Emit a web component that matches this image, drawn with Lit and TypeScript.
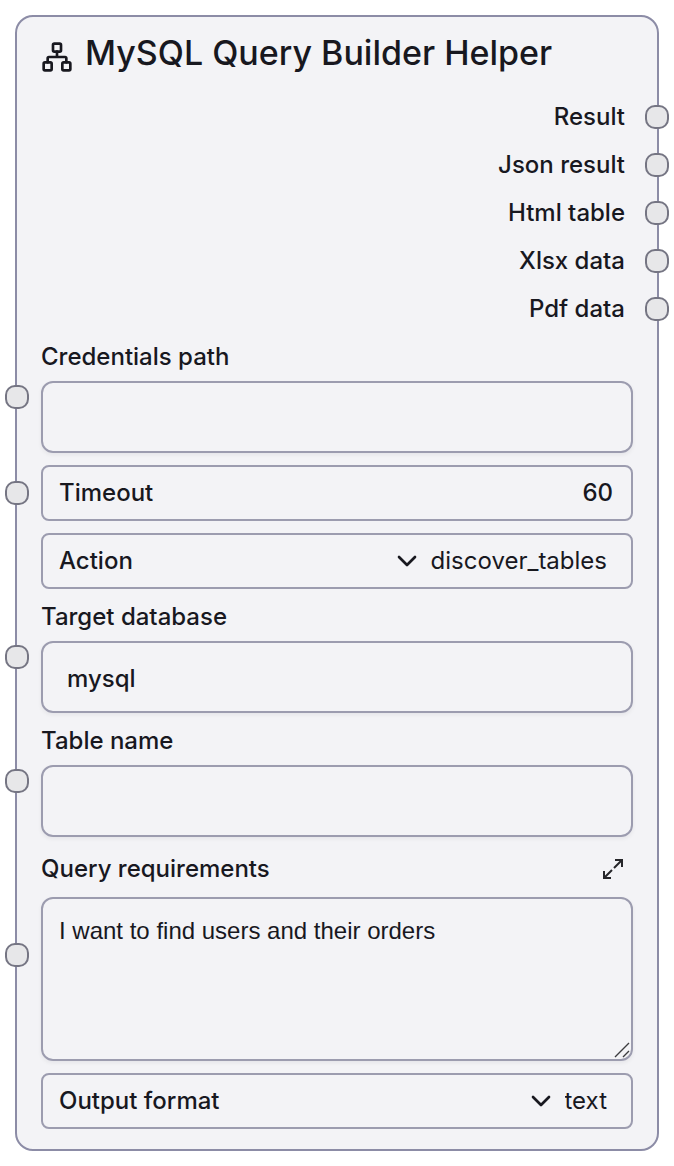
import { LitElement, html, css, svg } from "lit";
import { customElement, property } from "lit/decorators.js";

const chevron = svg`<svg class="chevron" viewBox="0 0 24 24" aria-hidden="true"><path d="m6 9 6 6 6-6"/></svg>`;

@customElement("app-root")
export class AppRoot extends LitElement {
  @property({ attribute: false }) outputs = ["Result", "Json result", "Html table", "Xlsx data", "Pdf data"];

  static styles = css`
    :host {
      display: block;
      padding: 15px;
      background: #fff;
      color: #18181f;
      font-family: Inter, "Liberation Sans", sans-serif;
      font-size: 24px;
      font-weight: 500;
      line-height: 32px;
    }
    * {
      box-sizing: border-box;
    }
    .node {
      display: flex;
      flex-direction: column;
      gap: 12px;
      padding: 16px 24px 20px;
      border: 2px solid #8c8ca6;
      border-radius: 18px;
      background: #f3f3f6;
    }
    .header {
      display: flex;
      align-items: center;
      gap: 12px;
      height: 40px;
    }
    .header svg {
      flex: none;
      width: 32px;
      height: 32px;
      margin-top: 8px;
    }
    h1 {
      margin: 0;
      font-size: 34px;
      font-weight: 500;
      line-height: 40px;
      white-space: nowrap;
    }
    svg {
      display: block;
      fill: none;
      stroke: currentColor;
      stroke-width: 2;
      stroke-linecap: round;
      stroke-linejoin: round;
    }
    .outputs {
      display: flex;
      flex-direction: column;
      gap: 16px;
      margin: 0;
      padding: 16px 0 4px;
      list-style: none;
    }
    .output {
      position: relative;
      padding-right: 8px;
      text-align: right;
    }
    .field {
      position: relative;
      display: flex;
      flex-direction: column;
      gap: 8px;
    }
    .handle {
      position: absolute;
      top: 50%;
      width: 24px;
      height: 24px;
      border: 2px solid #757583;
      border-radius: 10px;
      background: #e7e7e9;
      transform: translateY(-50%);
    }
    .in {
      left: -36px;
    }
    .out {
      right: -36px;
    }
    input,
    select,
    textarea {
      min-width: 0;
      margin: 0;
      border: 0;
      background: transparent;
      color: inherit;
      font: inherit;
      outline: none;
    }
    .box {
      display: block;
      width: 100%;
      height: 72px;
      padding: 2px 24px 0;
      border: 2px solid #9c9caf;
      border-radius: 12px;
      box-shadow: 0 2px 4px rgba(24, 24, 31, 0.06);
    }
    .area {
      height: 164px;
      padding: 16px;
      font-family: "Liberation Sans", Arial, sans-serif;
      font-weight: 400;
      resize: none;
    }
    .row {
      display: flex;
      align-items: center;
      height: 56px;
      padding: 0 16px;
      border: 2px solid #9c9caf;
      border-radius: 8px;
    }
    .number {
      flex: 1;
      text-align: right;
      appearance: textfield;
    }
    .number::-webkit-inner-spin-button {
      display: none;
    }
    .chevron {
      width: 32px;
      height: 32px;
      margin-left: auto;
      margin-right: 8px;
    }
    select {
      appearance: none;
      field-sizing: content;
      padding: 0 8px 0 0;
      font-weight: 400;
    }
    .caption {
      display: flex;
      align-items: center;
      justify-content: space-between;
      height: 40px;
    }
    button {
      display: grid;
      place-items: center;
      width: 40px;
      height: 40px;
      padding: 0;
      border: 0;
      background: none;
      color: #26262a;
    }
    .expand {
      width: 24px;
      height: 24px;
      stroke-linecap: butt;
      stroke-linejoin: miter;
    }
    .area-wrap {
      position: relative;
    }
    .grip {
      position: absolute;
      right: 3px;
      bottom: 3px;
      width: 16px;
      height: 16px;
      stroke: #3c3c3f;
      stroke-width: 1.4;
      stroke-linecap: butt;
      pointer-events: none;
    }
  `;

  private select(id: string, label: string, value: string) {
    return html`<div class="row">
      <label for=${id}>${label}</label>
      ${chevron}
      <select id=${id}><option>${value}</option></select>
    </div>`;
  }

  private text(id: string, label: string, value = "") {
    return html`<div class="field">
      <span class="handle in"></span>
      <label for=${id}>${label}</label>
      <input class="box" id=${id} type="text" .value=${value} />
    </div>`;
  }

  render() {
    return html`<section class="node">
      <header class="header">
        <svg viewBox="0 0 24 24" aria-hidden="true">
          <rect x="16" y="16" width="6" height="6" rx="1" />
          <rect x="2" y="16" width="6" height="6" rx="1" />
          <rect x="9" y="2" width="6" height="6" rx="1" />
          <path d="M5 16v-3a1 1 0 0 1 1-1h12a1 1 0 0 1 1 1v3M12 12V8" />
        </svg>
        <h1>MySQL Query Builder Helper</h1>
      </header>
      <ul class="outputs">
        ${this.outputs.map((name) => html`<li class="output">${name}<span class="handle out"></span></li>`)}
      </ul>
      ${this.text("credentials", "Credentials path")}
      <div class="field">
        <span class="handle in"></span>
        <div class="row">
          <label for="timeout">Timeout</label>
          <input class="number" id="timeout" type="number" .value=${"60"} />
        </div>
      </div>
      ${this.select("action", "Action", "discover_tables")}
      ${this.text("database", "Target database", "mysql")}
      ${this.text("table", "Table name")}
      <div class="field">
        <span class="handle in"></span>
        <div class="caption">
          <label for="query">Query requirements</label>
          <button type="button" aria-label="Expand">
            <svg class="expand" viewBox="0 0 24 24" aria-hidden="true">
              <path d="M14 3h7v7M21 3l-8 8M10 21H3v-7M3 21l8-8" />
            </svg>
          </button>
        </div>
        <div class="area-wrap">
          <textarea class="box area" id="query" .value=${"I want to find users and their orders"}></textarea>
          <svg class="grip" viewBox="0 0 16 16" aria-hidden="true"><path d="M1 15 15 1M9 15l6-6" /></svg>
        </div>
      </div>
      ${this.select("format", "Output format", "text")}
    </section>`;
  }
}
